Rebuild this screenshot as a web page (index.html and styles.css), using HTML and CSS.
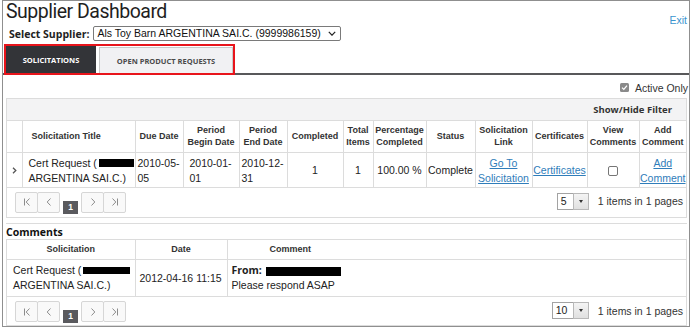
FILE: index.html
```html
<!DOCTYPE html>
<html lang="en">
<head>
<meta charset="utf-8">
<title>Supplier Dashboard</title>
<link rel="stylesheet" href="styles.css">
</head>
<body>
<div class="frame">
  <header class="top">
    <h1 class="title">Supplier Dashboard</h1>
    <a class="exit" href="#">Exit</a>
  </header>
  <div class="supplier">
    <span class="supplier-label">Select Supplier:</span>
    <div class="select">
      <span class="select-text">Als Toy Barn ARGENTINA SAI.C. (9999986159)</span>
      <svg class="select-arrow" width="8" height="5" viewBox="0 0 8 5"><polyline points="0.8,0.8 4,4.2 7.2,0.8" fill="none" stroke="#222" stroke-width="1.2"/></svg>
    </div>
  </div>
  <nav class="tabstrip">
    <div class="tabs">
      <span class="tab tab-active">SOLICITATIONS</span>
      <span class="tab tab-idle">OPEN PRODUCT REQUESTS</span>
    </div>
  </nav>
  <div class="filter">
    <svg class="chk-on" width="9" height="9" viewBox="0 0 9 9"><rect x="0" y="0" width="9" height="9" rx="1.5" fill="#8a8a8a"/><polyline points="2,4.6 3.8,6.4 7,2.6" fill="none" stroke="#fff" stroke-width="1.3"/></svg>
    <span class="filter-label">Active Only</span>
  </div>

  <div class="grid">
    <div class="toolbar">Show/Hide Filter</div>
    <table class="table sol">
      <colgroup>
        <col class="w15"><col class="w113"><col class="w48"><col class="w56"><col class="w48"><col class="w56"><col class="w30"><col class="w53"><col class="w49"><col class="w57"><col class="w55"><col class="w52"><col class="w47">
      </colgroup>
      <thead>
        <tr>
          <th></th>
          <th class="th-title">Solicitation Title</th>
          <th>Due Date</th>
          <th>Period Begin Date</th>
          <th>Period End Date</th>
          <th>Completed</th>
          <th>Total Items</th>
          <th>Percentage Completed</th>
          <th>Status</th>
          <th>Solicitation Link</th>
          <th>Certificates</th>
          <th>View Comments</th>
          <th>Add Comment</th>
        </tr>
      </thead>
      <tbody>
        <tr>
          <td class="c-expand"><svg width="5" height="7" viewBox="0 0 5 7"><polyline points="1,0.8 3.8,3.5 1,6.2" fill="none" stroke="#555" stroke-width="1.3"/></svg></td>
          <td class="c-title"><span class="nowrap">Cert Request (<span class="redact r-title"></span></span> ARGENTINA SAI.C.)</td>
          <td class="c-due">2010-05-05</td>
          <td class="c-begin">2010-01-01</td>
          <td class="c-end">2010-12-31</td>
          <td class="c-center">1</td>
          <td class="c-center">1</td>
          <td class="c-center">100.00 %</td>
          <td class="c-center">Complete</td>
          <td class="c-center"><a class="link" href="#">Go To Solicitation</a></td>
          <td class="c-center"><a class="link" href="#">Certificates</a></td>
          <td class="c-center"><span class="chk-off"></span></td>
          <td class="c-center"><a class="link" href="#">Add Comment</a></td>
        </tr>
      </tbody>
    </table>
    <div class="pager">
      <div class="pager-nav">
        <span class="pbtn"><svg width="8" height="8" viewBox="0 0 8 8"><line x1="1.5" y1="0.5" x2="1.5" y2="7.5" stroke="#8c8c8c"/><polyline points="6.5,0.5 3.2,4 6.5,7.5" fill="none" stroke="#8c8c8c"/></svg></span>
        <span class="pbtn"><svg width="8" height="8" viewBox="0 0 8 8"><polyline points="5.5,0.5 2.2,4 5.5,7.5" fill="none" stroke="#8c8c8c"/></svg></span>
        <span class="pnum">1</span>
        <span class="pbtn"><svg width="8" height="8" viewBox="0 0 8 8"><polyline points="2.5,0.5 5.8,4 2.5,7.5" fill="none" stroke="#8c8c8c"/></svg></span>
        <span class="pbtn"><svg width="8" height="8" viewBox="0 0 8 8"><polyline points="1.5,0.5 4.8,4 1.5,7.5" fill="none" stroke="#8c8c8c"/><line x1="6.5" y1="0.5" x2="6.5" y2="7.5" stroke="#8c8c8c"/></svg></span>
      </div>
      <div class="pager-info">
        <span class="psize"><span class="psize-val">5</span><span class="psize-btn"><svg width="4" height="3" viewBox="0 0 4 3"><polygon points="0,0 4,0 2,3" fill="#333"/></svg></span></span>
        <span class="pinfo">1 items in 1 pages</span>
      </div>
    </div>
  </div>

  <section class="comments">
    <h2 class="comments-title">Comments</h2>
    <div class="grid grid-comments">
      <table class="table com">
        <colgroup>
          <col class="w128"><col class="w92"><col>
        </colgroup>
        <thead>
          <tr>
            <th>Solicitation</th>
            <th>Date</th>
            <th class="th-comment">Comment</th>
          </tr>
        </thead>
        <tbody>
          <tr>
            <td class="c-sol"><span class="nowrap">Cert Request (<span class="redact r-sol"></span></span> ARGENTINA SAI.C.)</td>
            <td class="c-date">2012-04-16 11:15</td>
            <td class="c-comment"><span class="from">From:</span><span class="redact r-from"></span><br>Please respond ASAP</td>
          </tr>
        </tbody>
      </table>
      <div class="pager pager-sm">
        <div class="pager-nav">
          <span class="pbtn"><svg width="8" height="8" viewBox="0 0 8 8"><line x1="1.5" y1="0.5" x2="1.5" y2="7.5" stroke="#8c8c8c"/><polyline points="6.5,0.5 3.2,4 6.5,7.5" fill="none" stroke="#8c8c8c"/></svg></span>
          <span class="pbtn"><svg width="8" height="8" viewBox="0 0 8 8"><polyline points="5.5,0.5 2.2,4 5.5,7.5" fill="none" stroke="#8c8c8c"/></svg></span>
          <span class="pnum">1</span>
          <span class="pbtn"><svg width="8" height="8" viewBox="0 0 8 8"><polyline points="2.5,0.5 5.8,4 2.5,7.5" fill="none" stroke="#8c8c8c"/></svg></span>
          <span class="pbtn"><svg width="8" height="8" viewBox="0 0 8 8"><polyline points="1.5,0.5 4.8,4 1.5,7.5" fill="none" stroke="#8c8c8c"/><line x1="6.5" y1="0.5" x2="6.5" y2="7.5" stroke="#8c8c8c"/></svg></span>
        </div>
        <div class="pager-info">
          <span class="psize"><span class="psize-val psize-wide">10</span><span class="psize-btn"><svg width="4" height="3" viewBox="0 0 4 3"><polygon points="0,0 4,0 2,3" fill="#333"/></svg></span></span>
          <span class="pinfo">1 items in 1 pages</span>
        </div>
      </div>
    </div>
  </section>
</div>
</body>
</html>
```
FILE: styles.css
```css
* { box-sizing: border-box; }
html, body { margin: 0; padding: 0; background: #fff; }
body {
  font-family: "Liberation Sans", Arial, sans-serif;
  font-size: 10.5px;
  color: #222;
}

.frame {
  margin-left: 2px;
  width: 688px;
  height: 327px;
  border: 1px solid #8f8f8f;
}

/* header */
.top {
  display: flex;
  justify-content: space-between;
  align-items: flex-start;
  height: 24px;
  padding: 0 2px 0 3px;
}
.title {
  margin: 0;
  padding-right: 1px;
  font-family: Roboto, "Open Sans", sans-serif;
  font-weight: 400;
  font-size: 19.5px;
  line-height: 21.5px;
  letter-spacing: -0.5px;
  color: #1f1f1f;
}
.exit {
  padding-top: 13px;
  font-size: 10.5px;
  line-height: 12px;
  color: #3a95cf;
  text-decoration: none;
}

.supplier {
  display: flex;
  align-items: center;
  gap: 4px;
  height: 17px;
  padding-left: 6px;
}
.supplier-label {
  font-family: "Open Sans", sans-serif;
  font-weight: 700;
  font-size: 10.5px;
  color: #222;
}
.select {
  display: flex;
  align-items: center;
  justify-content: space-between;
  width: 248px;
  height: 15px;
  padding: 0 4px 0 3px;
  border: 1px solid #7a7a7a;
  border-radius: 2px;
  line-height: 13px;
  color: #111;
}

/* tabs */
.tabstrip {
  display: flex;
  height: 33px;
  padding-top: 2px;
  border-bottom: 2px solid #58585a;
}
.tabs {
  display: flex;
  align-items: flex-end;
  gap: 3px;
  width: 231px;
  height: 31px;
  margin-left: 1px;
  border: 2px solid #e8141b;
}
.tab {
  display: flex;
  align-items: center;
  justify-content: center;
  font-family: "Open Sans", sans-serif;
  font-weight: 700;
  font-size: 7.5px;
}
.tab-active {
  width: 90px;
  height: 27px;
  background: #333438;
  color: #fff;
}
.tab-idle {
  width: 134px;
  height: 26px;
  background: #f1f1f3;
  border: 1px solid #c8c8c8;
  border-bottom: 0;
  color: #4a4a4a;
}

/* filter */
.filter {
  display: flex;
  justify-content: flex-end;
  align-items: center;
  gap: 6px;
  height: 23px;
  padding: 2px 1px 0 0;
}
.filter-label { color: #333; }

/* grid */
.grid {
  margin: 0 2px 0 3px;
  border: 1px solid #dcdcdc;
}
.toolbar {
  height: 22px;
  padding-right: 14px;
  border-bottom: 1px solid #dcdcdc;
  background: #f3f3f4;
  text-align: right;
  font-family: "Open Sans", sans-serif;
  font-weight: 700;
  font-size: 9.5px;
  line-height: 21px;
  color: #333;
}

.table {
  width: 100%;
  border-collapse: collapse;
  table-layout: fixed;
}
.w15 { width: 15px; }
.w30 { width: 30px; }
.w47 { width: 47px; }
.w48 { width: 48px; }
.w49 { width: 49px; }
.w52 { width: 52px; }
.w53 { width: 53px; }
.w55 { width: 55px; }
.w56 { width: 56px; }
.w57 { width: 57px; }
.w92 { width: 92px; }
.w113 { width: 113px; }
.w128 { width: 128px; }

.table th {
  padding: 0 1px;
  border-bottom: 1px solid #dcdcdc;
  font-size: 9px;
  font-weight: 700;
  line-height: 12.5px;
  color: #333;
  text-align: center;
  vertical-align: middle;
}
.table td {
  padding: 0;
  border-bottom: 1px solid #dcdcdc;
  line-height: 15px;
  vertical-align: middle;
  color: #222;
}
.table th + th,
.table td + td { border-left: 1px solid #dcdcdc; }

.sol thead tr { height: 31px; }
.sol tbody tr { height: 35px; }
.sol tbody td { padding-top: 2px; }
.th-title { text-align: left !important; padding-left: 9px !important; }

.c-expand { text-align: center; }
.c-expand svg { display: block; margin: 0 auto; }
.c-title { padding-left: 6px !important; }
.c-due { padding-left: 2px !important; }
.c-begin { padding-left: 6px !important; }
.c-end { padding-left: 2px !important; }
.c-center { text-align: center; }

.nowrap { white-space: nowrap; }
.redact {
  display: inline-block;
  background: #000;
  vertical-align: baseline;
}
.r-title { width: 35px; height: 8px; margin-left: 2px; }
.r-sol { width: 47px; height: 7px; margin-left: 2px; }
.r-from { width: 75px; height: 9px; margin-left: 4px; vertical-align: -2px; }

.link { color: #2f7dba; text-decoration: underline; }

.chk-off {
  display: inline-block;
  width: 10px;
  height: 10px;
  border: 1px solid #767676;
  border-radius: 2px;
  background: #fff;
  vertical-align: middle;
}

/* pager */
.pager {
  display: flex;
  justify-content: space-between;
  align-items: flex-start;
  height: 29px;
  padding: 4px 3px 0 8px;
}
.pager-sm { height: 28px; }
.pager-nav { display: flex; align-items: flex-start; }
.pbtn {
  display: flex;
  align-items: center;
  justify-content: center;
  width: 23px;
  height: 21px;
  border: 1px solid #d6d6d6;
  border-radius: 2px;
  background: #f9f9f9;
}
.pbtn + .pbtn { margin-left: -1px; }
.pnum {
  width: 15px;
  height: 13px;
  margin: 9px 3px 0;
  background: #5a5a5e;
  color: #fff;
  font-size: 8.5px;
  font-weight: 700;
  line-height: 13px;
  text-align: center;
}
.pager-info { display: flex; align-items: center; height: 19px; }
.psize { display: flex; height: 17px; }
.psize-val {
  width: 16px;
  padding-left: 3px;
  border: 1px solid #a3a3a3;
  border-right: 0;
  background: #fff;
  line-height: 15px;
  color: #222;
}
.psize-wide { width: 21px; }
.psize-btn {
  display: flex;
  align-items: center;
  justify-content: center;
  width: 16px;
  border: 1px solid #b8b8b8;
  background: linear-gradient(#f4f4f4, #e0e0e0);
}
.pinfo { margin-left: 9px; color: #333; }

/* comments */
.comments {
  margin: 5px 2px 0 3px;
  border-top: 1px solid #dcdcdc;
}
.comments-title {
  height: 15px;
  margin: 0;
  padding-top: 2px;
  font-family: "Open Sans", sans-serif;
  font-weight: 700;
  font-size: 10.5px;
  line-height: 13px;
  color: #111;
}
.grid-comments { margin: 0; }
.com thead tr { height: 20px; }
.com tbody tr { height: 37px; }
.th-comment { text-align: left !important; padding-left: 42px !important; }
.c-sol { padding-left: 6px !important; }
.c-date { padding-left: 4px !important; white-space: nowrap; }
.c-comment { padding-left: 4px !important; }
.from {
  font-family: "Open Sans", sans-serif;
  font-weight: 700;
}
```
